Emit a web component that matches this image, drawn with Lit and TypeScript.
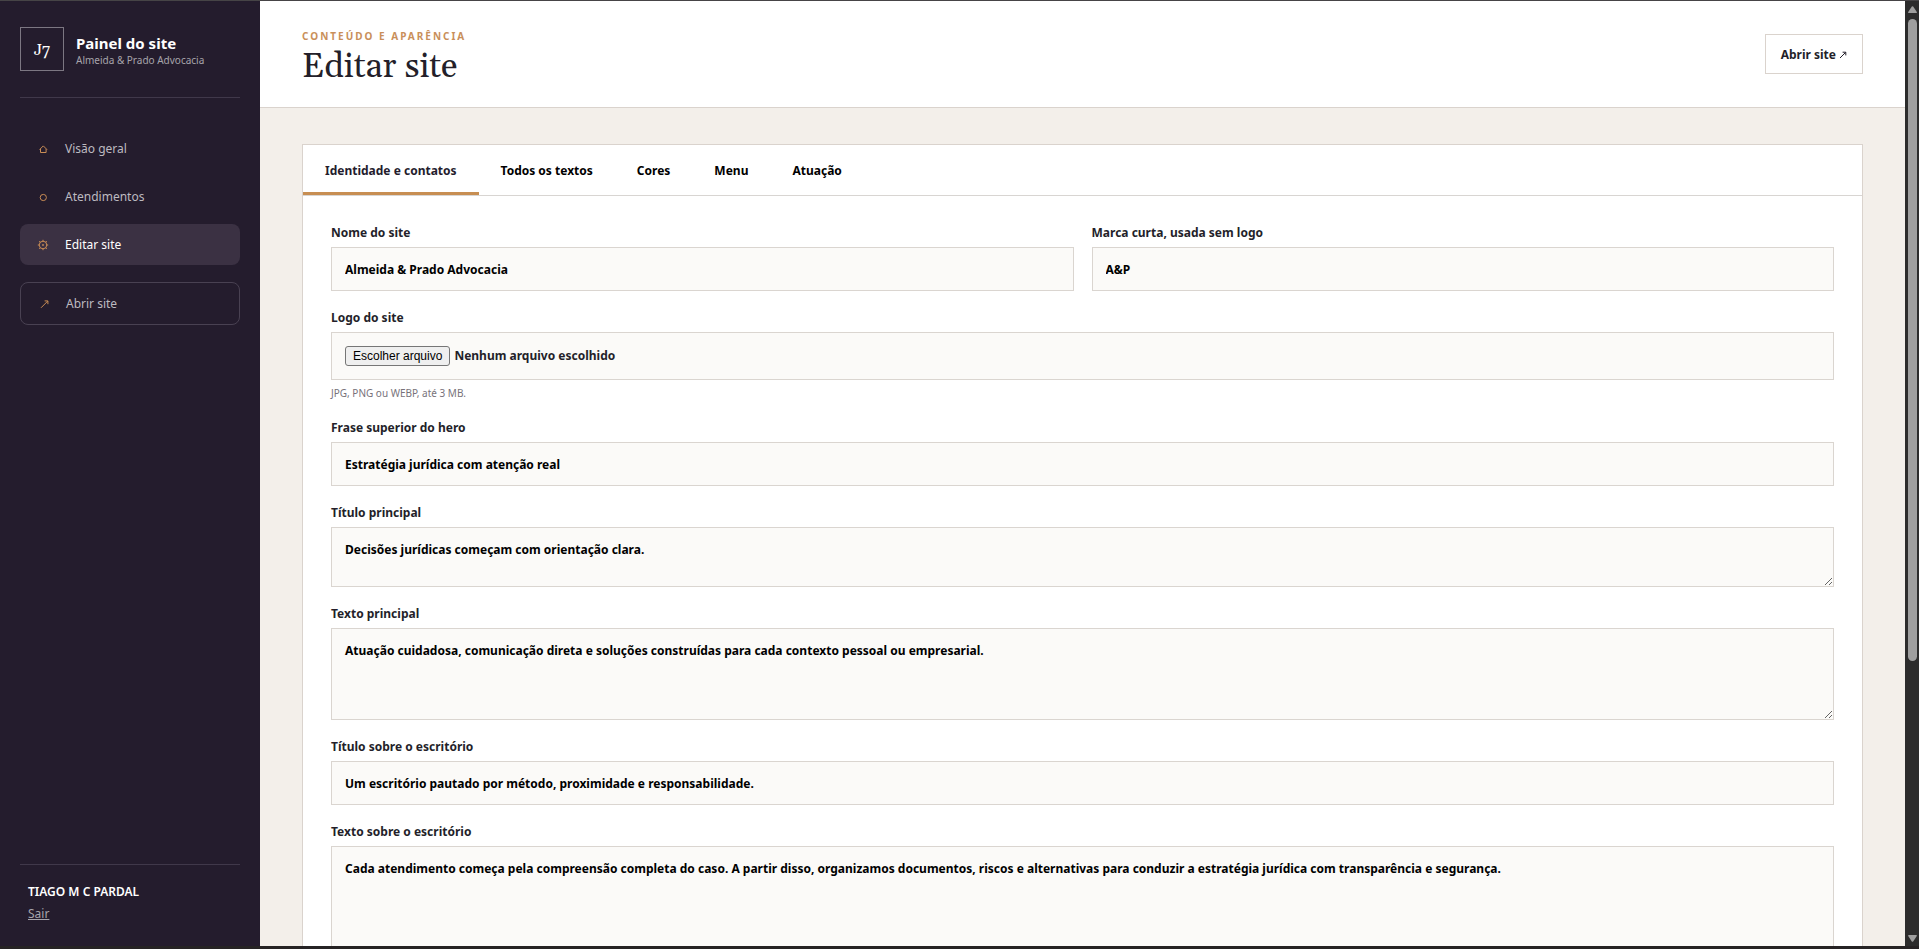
import { LitElement, html, css, svg, nothing } from "lit";
import { customElement, state } from "lit/decorators.js";
import { classMap } from "lit/directives/class-map.js";

type Field = {
  id: string;
  label: string;
  value?: string;
  kind: "text" | "file" | "short" | "medium" | "long";
  half?: boolean;
};

const ICONS = {
  home: svg`<path d="M5.6 9.6 9.3 5.9 13 9.6M6.5 9v3.5h5.6V9" />`,
  circle: svg`<circle cx="9.3" cy="9.5" r="3.1" />`,
  gear: svg`<circle cx="9" cy="9" r="3.8" /><circle cx="9" cy="9" r=".6" />
    <path d="M9 5.4V3.8M9 14.2v-1.6M5.4 9H3.8M14.2 9h-1.6M6.4 6.4 5.2 5.2M12.8 12.8l-1.2-1.2M6.4 11.6l-1.2 1.2M12.8 5.2l-1.2 1.2" />`,
  arrow: svg`<path d="M6 12.8 12.8 6M9.6 5.9h3.3v3.3" />`,
};

const NAV: { icon: keyof typeof ICONS; label: string; kind?: string }[] = [
  { icon: "home", label: "Visão geral" },
  { icon: "circle", label: "Atendimentos" },
  { icon: "gear", label: "Editar site", kind: "current" },
  { icon: "arrow", label: "Abrir site", kind: "outlined" },
];

const TABS = ["Identidade e contatos", "Todos os textos", "Cores", "Menu", "Atuação"];

const FIELDS: Field[] = [
  { id: "name", label: "Nome do site", value: "Almeida & Prado Advocacia", kind: "text", half: true },
  { id: "brand", label: "Marca curta, usada sem logo", value: "A&P", kind: "text", half: true },
  { id: "logo", label: "Logo do site", kind: "file" },
  { id: "kicker", label: "Frase superior do hero", value: "Estratégia jurídica com atenção real", kind: "text" },
  { id: "title", label: "Título principal", value: "Decisões jurídicas começam com orientação clara.", kind: "short" },
  {
    id: "text",
    label: "Texto principal",
    value: "Atuação cuidadosa, comunicação direta e soluções construídas para cada contexto pessoal ou empresarial.",
    kind: "medium",
  },
  {
    id: "about-title",
    label: "Título sobre o escritório",
    value: "Um escritório pautado por método, proximidade e responsabilidade.",
    kind: "text",
  },
  {
    id: "about-text",
    label: "Texto sobre o escritório",
    value:
      "Cada atendimento começa pela compreensão completa do caso. A partir disso, organizamos documentos, riscos e alternativas para conduzir a estratégia jurídica com transparência e segurança.",
    kind: "long",
  },
];

@customElement("admin-sidebar")
class AdminSidebar extends LitElement {
  static styles = css`
    :host {
      display: flex;
      flex-direction: column;
      box-sizing: border-box;
      padding: 26px 20px 23px;
      background: #241c2d;
      color: #fff;
    }
    .brand {
      display: flex;
      align-items: center;
      gap: 12px;
      padding-bottom: 26px;
      border-bottom: 1px solid #40384a;
    }
    .mark {
      display: grid;
      place-items: center;
      box-sizing: border-box;
      width: 44px;
      height: 44px;
      padding-top: 2px;
      border: 1px solid #7c7782;
      font: 16px/20px Gelasio, Georgia, "Liberation Serif", serif;
    }
    .brand-text {
      display: grid;
      padding-top: 2px;
    }
    .name {
      font-size: 15px;
      line-height: 20px;
      font-weight: 700;
    }
    .client {
      font-size: 10px;
      line-height: 14px;
      color: #a7a4ab;
    }
    .nav {
      display: flex;
      flex-direction: column;
      gap: 7px;
      margin-top: 30px;
    }
    .item {
      display: flex;
      align-items: center;
      gap: 13px;
      padding: 12px 14px 11px;
      border-radius: 8px;
      color: #bdbac0;
      font-size: 12px;
      line-height: 18px;
      text-decoration: none;
    }
    .current {
      background: #3b3143;
      color: #fff;
    }
    .outlined {
      margin-top: 10px;
      border: 1px solid #494152;
    }
    .icon {
      width: 18px;
      height: 18px;
      fill: none;
      stroke: #c98c55;
    }
    .account {
      display: flex;
      flex-direction: column;
      align-items: flex-start;
      gap: 4px;
      margin-top: auto;
      padding: 18px 8px 0;
      border-top: 1px solid #40384a;
      font-size: 12px;
      line-height: 18px;
    }
    .user {
      font-weight: 600;
    }
    .logout {
      color: #a7a4ab;
    }
  `;

  render() {
    return html`
      <div class="brand">
        <span class="mark">J7</span>
        <div class="brand-text">
          <span class="name">Painel do site</span>
          <span class="client">Almeida &amp; Prado Advocacia</span>
        </div>
      </div>
      <nav class="nav">
        ${NAV.map(
          (n) => html`<a
            href="#"
            class=${classMap({ item: true, current: n.kind === "current", outlined: n.kind === "outlined" })}
            aria-current=${n.kind === "current" ? "page" : nothing}
            ><svg class="icon" viewBox="0 0 18 18" aria-hidden="true">${ICONS[n.icon]}</svg>${n.label}</a
          >`
        )}
      </nav>
      <div class="account">
        <span class="user">TIAGO M C PARDAL</span>
        <a class="logout" href="#">Sair</a>
      </div>
    `;
  }
}

@customElement("site-form")
class SiteForm extends LitElement {
  @state() private tab = 0;
  @state() private fileName = "Nenhum arquivo escolhido";

  static styles = css`
    :host {
      display: block;
      border: 1px solid #dad3cd;
      background: #fff;
      color: #241f2a;
      font-size: 12px;
      font-weight: 700;
    }
    .tabs {
      display: flex;
      border-bottom: 1px solid #d8d5d2;
    }
    .tab {
      height: 50px;
      padding: 3px 22px 0;
      border: 0;
      border-bottom: 3px solid transparent;
      background: none;
      color: #000;
      font: inherit;
    }
    .selected {
      border-color: #c78e52;
      color: #241c2d;
    }
    .form {
      display: grid;
      grid-template-columns: 1fr 1fr;
      gap: 19px 18px;
      padding: 29px 28px;
    }
    .field {
      display: grid;
      gap: 6px;
      grid-column: 1 / -1;
    }
    .half {
      grid-column: auto;
    }
    .label {
      line-height: 16px;
    }
    .box {
      display: block;
      box-sizing: border-box;
      width: 100%;
      margin: 0;
      padding: 13px;
      border: 1px solid #dad5d0;
      border-radius: 0;
      background: #fbfaf8;
      color: #000;
      font: inherit;
      line-height: 18px;
    }
    .text {
      height: 44px;
    }
    .short {
      height: 60px;
    }
    .medium {
      height: 92px;
    }
    .long {
      height: 124px;
    }
    textarea {
      resize: vertical;
    }
    .file {
      display: flex;
      align-items: center;
      gap: 4px;
      height: 48px;
      color: #241f2a;
    }
    .native {
      position: absolute;
      width: 1px;
      height: 1px;
      opacity: 0;
    }
    .choose {
      padding: 0 7px;
      border: 1px solid #767676;
      border-radius: 3px;
      background: #efefef;
      color: #000;
      font: 12px/18px "Liberation Sans", Arial, sans-serif;
    }
    .hint {
      color: #77727a;
      font-size: 10px;
      line-height: 15px;
      font-weight: 400;
    }
  `;

  private pick(e: Event) {
    const f = (e.target as HTMLInputElement).files?.[0];
    this.fileName = f ? f.name : "Nenhum arquivo escolhido";
  }

  private control(f: Field) {
    if (f.kind === "file") {
      return html`
        <div class="box file">
          <input class="native" id=${f.id} type="file" accept=".jpg,.png,.webp" @change=${this.pick} />
          <label class="choose" for=${f.id}>Escolher arquivo</label>
          <span>${this.fileName}</span>
        </div>
        <span class="hint">JPG, PNG ou WEBP, até 3 MB.</span>
      `;
    }
    if (f.kind === "text") {
      return html`<input class="box text" id=${f.id} type="text" .value=${f.value ?? ""} />`;
    }
    return html`<textarea class="box ${f.kind}" id=${f.id} .value=${f.value ?? ""}></textarea>`;
  }

  render() {
    return html`
      <div class="tabs" role="tablist">
        ${TABS.map(
          (t, i) => html`<button
            type="button"
            role="tab"
            aria-selected=${i === this.tab}
            class=${classMap({ tab: true, selected: i === this.tab })}
            @click=${() => (this.tab = i)}
          >
            ${t}
          </button>`
        )}
      </div>
      <form class="form">
        ${FIELDS.map(
          (f) => html`<div class=${classMap({ field: true, half: !!f.half })}>
            <label class="label" for=${f.id}>${f.label}</label>
            ${this.control(f)}
          </div>`
        )}
      </form>
    `;
  }
}

@customElement("app-root")
class AppRoot extends LitElement {
  static styles = css`
    :host {
      display: grid;
      grid-template-columns: 260px minmax(0, 1fr) 14px;
      box-sizing: border-box;
      height: 100vh;
      border-top: 1px solid #464446;
      border-bottom: 3px solid #262324;
      font-family: "Noto Sans", "Open Sans", sans-serif;
    }
    .page {
      overflow-y: auto;
      scrollbar-width: none;
      background: #f3efea;
    }
    .top {
      display: flex;
      align-items: center;
      justify-content: space-between;
      padding: 22px 42px;
      border-bottom: 1px solid #dad3cd;
      background: #fff;
    }
    .eyebrow {
      margin: 0;
      color: #c98f5a;
      font-size: 10px;
      line-height: 26px;
      font-weight: 700;
      letter-spacing: 2px;
      text-transform: uppercase;
    }
    .title {
      margin: 0;
      color: #241f2a;
      font: 400 34px/36px Gelasio, Georgia, "Liberation Serif", serif;
    }
    .open {
      display: flex;
      align-items: center;
      gap: 3px;
      padding: 11px 15px 9px;
      border: 1px solid #dad3cd;
      color: #241f2a;
      font-size: 12px;
      line-height: 18px;
      font-weight: 700;
      text-decoration: none;
    }
    .glyph {
      width: 8px;
      height: 8px;
      fill: none;
      stroke: currentColor;
    }
    .content {
      padding: 36px 42px;
    }
    .rail {
      display: flex;
      flex-direction: column;
      align-items: center;
      gap: 6px;
      padding: 5px 0 4px;
      background: #2c2c2c;
    }
    .cap {
      width: 9px;
      height: 7px;
      fill: #9f9f9f;
    }
    .track {
      flex: 1;
      width: 9px;
    }
    .thumb {
      height: 70.5%;
      border-radius: 5px;
      background: #9f9f9f;
    }
  `;

  render() {
    return html`
      <admin-sidebar></admin-sidebar>
      <main class="page">
        <header class="top">
          <div>
            <p class="eyebrow">Conteúdo e aparência</p>
            <h1 class="title">Editar site</h1>
          </div>
          <a class="open" href="#"
            >Abrir site<svg class="glyph" viewBox="0 0 8 8" aria-hidden="true">
              <path d="M1 7 6.5 1.5M3.6 1.2h3.2v3.2" /></svg
          ></a>
        </header>
        <div class="content"><site-form></site-form></div>
      </main>
      <div class="rail" aria-hidden="true">
        <svg class="cap" viewBox="0 0 9 7"><path d="M3.8.6q.7-.8 1.4 0L8.8 6q.3 1-.6 1H.8q-.9 0-.6-1z" /></svg>
        <div class="track"><div class="thumb"></div></div>
        <svg class="cap" viewBox="0 0 9 7"><path d="M3.8 6.4q.7.8 1.4 0L8.8 1q.3-1-.6-1H.8Q-.1 0 .2 1z" /></svg>
      </div>
    `;
  }
}
